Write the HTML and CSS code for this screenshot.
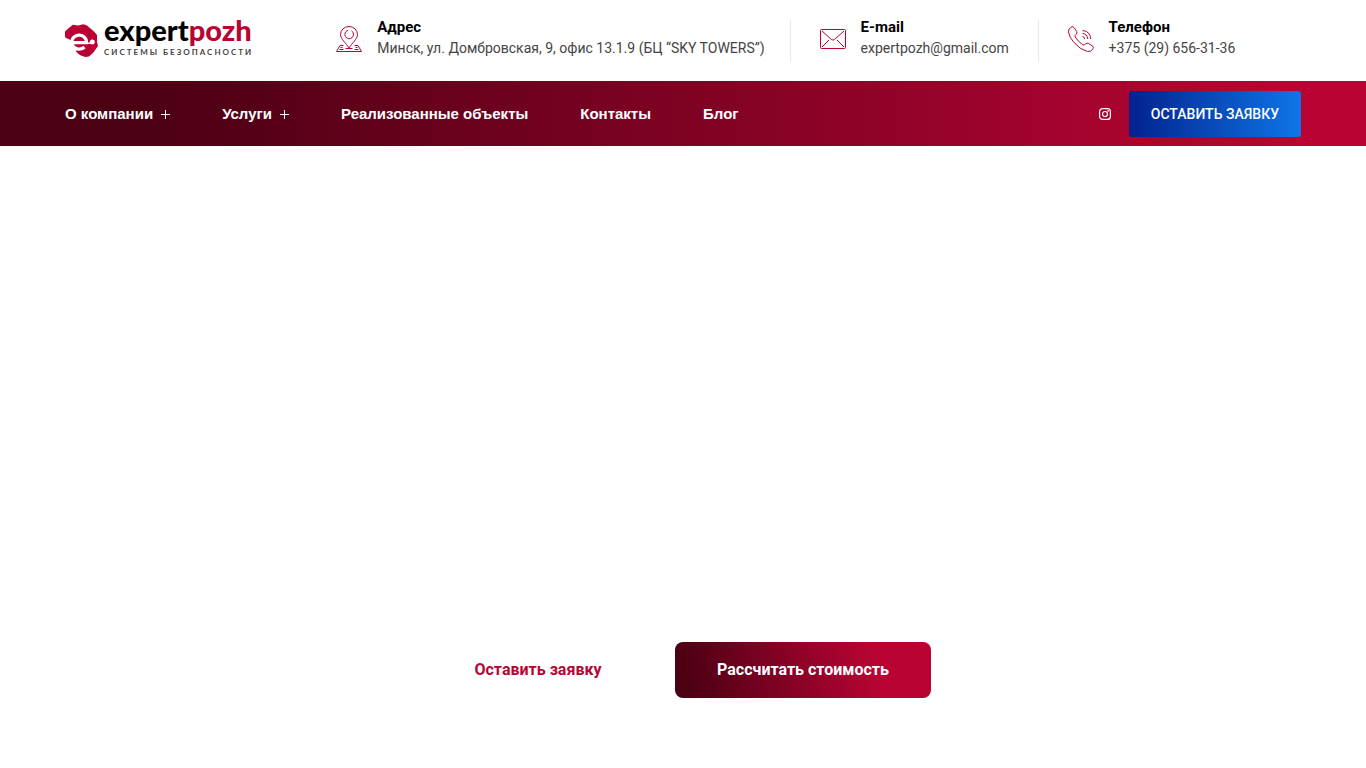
FILE: index.html
```html
<!DOCTYPE html>
<html lang="ru">
<head>
    <meta charset="UTF-8">
    <meta name="viewport" content="width=device-width, initial-scale=1.0">
    <title>Expertpozh</title>
    <link rel="stylesheet" href="styles.css">
</head>
<body>
    <header>
        <div class="top-bar">
            <a class="logo" href="#">
                <svg class="logo-mark" viewBox="0 0 34 36" aria-hidden="true">
                    <path fill="#b90433" d="M5 4L8 1.800L13 2.500L18.500 1.200L22 2.500L29 8.500L32 12L32 19L33 23L28 30L24 33.500L20.500 34Q15 33 11 28.500L5 23L3 18.500L0 14V8.500Z"/>
                    <path fill="none" stroke="#fff" stroke-width="3.200" d="M6.500 19.600H21.500A7.400 7 0 1 0 19.500 24"/>
                    <path fill="#fff" d="M0 14.500L5.500 17L6.500 23L11.500 27.200L10 29.500H2Z"/>
                    <path fill="none" stroke="#fff" stroke-width="1.500" d="M21 20.200H27"/>
                    <circle cx="27.300" cy="19" r="2.500" fill="#fff"/>
                </svg>
                <span class="logo-text">
                    <span class="logo-name">expert<span class="logo-accent">pozh</span></span>
                    <span class="logo-slogan">СИСТЕМЫ БЕЗОПАСНОСТИ</span>
                </span>
            </a>
            <ul class="contacts">
                <li class="contact">
                    <svg class="contact-icon" viewBox="0 0 26 26" aria-hidden="true">
                        <path d="M13 22C10 17 4.500 13 4.500 8.500a8.500 8 0 0 1 17 0C21.500 13 16 17 13 22z"/>
                        <path d="M15.500 4.800A4.300 4.300 0 1 1 12 4.300"/>
                        <path d="M7.500 19.500H4L.5 25.500h25L22 19.500h-3.500M6.500 21.500H4.500M19.500 21.500h2M3.500 23.500h4M9.500 22.500h7M18.500 23.500h4"/>
                    </svg>
                    <div>
                        <h5>Адрес</h5>
                        <p>Минск, ул. Домбровская, 9, офис 13.1.9 (БЦ “SKY TOWERS”)</p>
                    </div>
                </li>
                <li class="contact">
                    <svg class="contact-icon" viewBox="0 0 26 26" aria-hidden="true">
                        <rect x=".5" y="3.500" width="25" height="19" rx="1"/>
                        <path d="M2 5l9.500 8.500q1.500 1.200 3 0L24 5M2 21l7-7M24 21l-7-7"/>
                    </svg>
                    <div>
                        <h5>E-mail</h5>
                        <p><a href="mailto:expertpozh@gmail.com">expertpozh@gmail.com</a></p>
                    </div>
                </li>
                <li class="contact">
                    <svg class="contact-icon" viewBox="0 0 26 26" aria-hidden="true">
                        <path d="M3 1.200Q4.700 0 6 1.500L8.700 5.500Q9.500 7 8 8.500Q6.500 9.500 7.200 11Q10 15.500 14.800 18.800Q16.200 19.500 17.500 18Q19 16.500 20.500 17.400L24.500 20Q26 21.300 25 22.800Q23 26 19.500 25.500Q12 23.500 6 16.500Q1 11 .5 6Q.3 3 3 1.200z"/>
                        <path d="M14.500 10.500q1.800 .2 2.200 2.500M14.500 7.500q4.700 .3 5.300 5.500M14.500 4.500Q22 5 22.800 13"/>
                    </svg>
                    <div>
                        <h5>Телефон</h5>
                        <p><a href="tel:+375296563136">+375 (29) 656-31-36</a></p>
                    </div>
                </li>
            </ul>
        </div>
        <div class="nav-bar">
            <nav>
                <ul class="menu">
                    <li><a class="has-children" href="#">О компании</a></li>
                    <li><a class="has-children" href="#">Услуги</a></li>
                    <li><a href="#">Реализованные объекты</a></li>
                    <li><a href="#">Контакты</a></li>
                    <li><a href="#">Блог</a></li>
                </ul>
            </nav>
            <div class="nav-right">
                <a class="social" href="#" aria-label="Instagram">
                    <svg viewBox="0 0 12 12" aria-hidden="true">
                        <rect x=".6" y=".6" width="10.800" height="10.800" rx="3"/>
                        <circle cx="6" cy="6" r="2.500"/>
                        <circle cx="9.100" cy="2.900" r=".3"/>
                    </svg>
                </a>
                <button class="btn-request" type="button">ОСТАВИТЬ ЗАЯВКУ</button>
            </div>
        </div>
    </header>
    <main class="hero">
        <div class="hero-buttons">
            <button class="btn btn-light" type="button">Оставить заявку</button>
            <button class="btn btn-main" type="button">Рассчитать стоимость</button>
        </div>
    </main>
</body>
</html>
```
FILE: styles.css
```css
* {
    box-sizing: border-box;
}

body {
    margin: 0;
    min-height: 100vh;
    display: flex;
    flex-direction: column;
    font-family: Roboto, sans-serif;
    font-size: 14px;
    color: #444;
    background-color: #fff;
}

h5,
p,
ul {
    margin: 0;
    padding: 0;
}

ul {
    list-style: none;
}

a {
    color: inherit;
    text-decoration: none;
}

button {
    border: none;
    font-family: inherit;
    cursor: pointer;
}

/* top bar */
.top-bar {
    display: flex;
    align-items: flex-start;
    gap: 83px;
    padding: 20px 65px 18px;
}

.logo {
    display: flex;
    align-items: flex-start;
    gap: 5px;
}

.logo-mark {
    width: 34px;
    height: 36px;
    margin-top: 3px;
}

.logo-text {
    display: flex;
    flex-direction: column;
    gap: 8px;
}

.logo-name {
    font-family: Lato, sans-serif;
    font-size: 29px;
    font-weight: 900;
    line-height: 19px;
    color: #000;
}

.logo-accent {
    color: #b90433;
}

.logo-slogan {
    font-family: Lato, sans-serif;
    font-size: 8px;
    font-weight: 700;
    line-height: 10px;
    letter-spacing: 2px;
    white-space: nowrap;
}

.contacts {
    display: flex;
}

.contact {
    display: flex;
    align-items: flex-start;
    gap: 15px;
    min-width: 248px;
    height: 43px;
    padding-right: 25px;
    white-space: nowrap;
}

.contact + .contact {
    padding-left: 29px;
    border-left: 1px solid #e9e9e9;
}

.contact-icon {
    width: 26px;
    height: 26px;
    margin-top: 6px;
    fill: none;
    stroke: #b90433;
    stroke-width: 1;
}

.contact h5 {
    margin-bottom: 3px;
    font-size: 15px;
    font-weight: 700;
    line-height: 15px;
    color: #000;
}

.contact p {
    line-height: 21px;
}

/* navigation */
.nav-bar {
    display: flex;
    align-items: center;
    justify-content: space-between;
    min-height: 65px;
    padding: 0 65px;
    color: #fff;
    background: linear-gradient(90deg, #4b0014 10%, #b90433 95%);
}

.menu {
    display: flex;
    gap: 52px;
    font-family: "Liberation Sans", Arial, sans-serif;
    font-size: 15px;
    font-weight: 700;
}

.menu a {
    display: flex;
    align-items: center;
    gap: 8px;
}

.has-children::after {
    content: "";
    width: 9px;
    height: 9px;
    margin-top: 2px;
    background:
        linear-gradient(#fff, #fff) center / 9px 1px no-repeat,
        linear-gradient(#fff, #fff) center / 1px 9px no-repeat;
}

.nav-right {
    display: flex;
    align-items: center;
    gap: 18px;
}

.social svg {
    display: block;
    width: 12px;
    height: 12px;
    fill: none;
    stroke: #fff;
    stroke-width: 1.2;
}

.btn-request {
    height: 46px;
    padding: 0 22px;
    border-radius: 3px;
    font-size: 14px;
    font-weight: 500;
    color: #fff;
    background: linear-gradient(90deg, #03228f, #0f75e8);
}

/* hero */
.hero {
    flex: 1;
    display: flex;
    flex-direction: column;
    justify-content: flex-end;
    padding-bottom: 70px;
}

.hero-buttons {
    display: flex;
    justify-content: center;
    gap: 34px;
}

.btn {
    height: 56px;
    padding: 0 36px 2px;
    border-radius: 8px;
    font-size: 16px;
    font-weight: 700;
}

.btn-light {
    min-width: 206px;
    color: #b90433;
    background-color: #fff;
}

.btn-main {
    min-width: 256px;
    color: #fff;
    background: linear-gradient(75deg, #4b0014 5%, #b90433 78%);
}
```
